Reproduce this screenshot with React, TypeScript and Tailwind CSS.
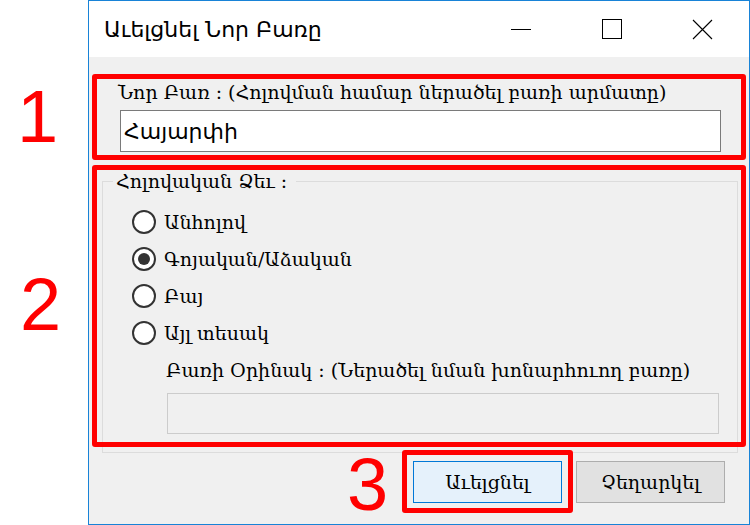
import React from "react";

const serif = "font-['DejaVu_Serif','Liberation_Serif',serif]";
const sans = "font-['DejaVu_Sans','Liberation_Sans',sans-serif]";

const options = [
  { label: "Անհոլով", checked: false },
  { label: "Գոյական/Աձական", checked: true },
  { label: "Բայ", checked: false },
  { label: "Այլ տեսակ", checked: false },
];

function Radio({ label, checked }: { label: string; checked: boolean }) {
  return (
    <div className="flex h-[37px] items-center">
      <span className="flex h-[24px] w-[24px] items-center justify-center rounded-full border-2 border-[#333] bg-white">
        {checked && <span className="h-[12px] w-[12px] rounded-full bg-[#333]" />}
      </span>
      <span className="ml-[8px] text-[19px] leading-[24px] text-black">{label}</span>
    </div>
  );
}

const App = () => {
  return (
    <div className="relative flex h-[525px] w-[750px] overflow-hidden bg-white">
      <div className="w-[88px] shrink-0" />

      {/* Dialog window */}
      <div className="flex h-[525px] w-[662px] flex-col border border-[#1883d7] bg-[#f0f0f0]">
        {/* Title bar */}
        <div className="flex h-[56px] items-center bg-white pr-[1px]">
          <div className={`${sans} ml-[15px] flex-1 text-[22px] text-black`}>Աւելցնել Նոր Բառը</div>
          <div className="flex h-full w-[91px] items-center justify-center">
            <span className="h-px w-[20px] bg-black" />
          </div>
          <div className="flex h-full w-[91px] items-center justify-center">
            <span className="h-[20px] w-[20px] border border-black" />
          </div>
          <div className="flex h-full w-[91px] items-center justify-center">
            <svg width="21" height="21" viewBox="0 0 21 21">
              <path d="M1 1 L20 20 M20 1 L1 20" stroke="#000" strokeWidth="1.1" />
            </svg>
          </div>
        </div>

        {/* Body */}
        <div className={`${serif} flex flex-col`}>
          <div className="ml-[29px] mt-[23px] text-[19px] leading-[24px] text-black">
            Նոր Բառ : (Հոլովման համար ներածել բառի արմատը)
          </div>
          <div className="ml-[31px] mt-[6px] flex h-[42px] w-[601px] items-center border border-[#7a7a7a] bg-white pl-[3px]">
            <span className={`${sans} text-[22px] text-black`}>Հայարփի</span>
          </div>

          <fieldset className="ml-[13px] mt-[17px] w-[636px] border border-[#dcdcdc] px-[10px] pb-[18px]">
            <legend className="px-[3px] text-[19px] leading-[24px] text-black">Հոլովական Ձեւ :&nbsp;</legend>
            <div className="ml-[19px] mt-[10px] flex flex-col">
              {options.map((o) => (
                <Radio key={o.label} label={o.label} checked={o.checked} />
              ))}
            </div>
            <div className="ml-[53px] mt-[7px] text-[19px] leading-[24px] text-black">
              Բառի Օրինակ : (Ներածել նման խոնարհուող բառը)
            </div>
            <div className="ml-[54px] mt-[11px] h-[41px] w-[552px] border border-[#cccccc] bg-[#f0f0f0]" />
          </fieldset>

          <div className="mt-[8px] flex justify-end gap-[14px] pr-[24px]">
            <button className="h-[42px] w-[149px] border border-[#0078d7] bg-[#e5f1fb] text-[19px] text-black">
              Աւելցնել
            </button>
            <button className="h-[42px] w-[149px] border border-[#adadad] bg-[#e1e1e1] text-[19px] text-black">
              Չեղարկել
            </button>
          </div>
        </div>
      </div>

      {/* Annotations */}
      <div className="absolute left-[92px] top-[74px] h-[86px] w-[654px] rounded-[3px] border-[5px] border-[#ff0000]" />
      <div className="absolute left-[92px] top-[165px] h-[282px] w-[654px] rounded-[3px] border-[5px] border-[#ff0000]" />
      <div className="absolute left-[402px] top-[450px] h-[63px] w-[171px] rounded-[3px] border-[5px] border-[#ff0000]" />
      <div className="absolute left-[17px] top-[80px] font-['Liberation_Sans',sans-serif] text-[74px] leading-none text-[#ff0000]">1</div>
      <div className="absolute left-[20px] top-[268px] font-['Liberation_Sans',sans-serif] text-[74px] leading-none text-[#ff0000]">2</div>
      <div className="absolute left-[347px] top-[448px] font-['Liberation_Sans',sans-serif] text-[74px] leading-none text-[#ff0000]">3</div>
    </div>
  );
};

export default App;
